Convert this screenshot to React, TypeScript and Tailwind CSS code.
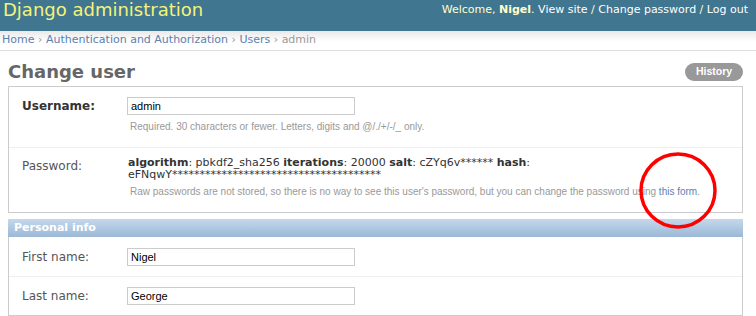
import React from "react";

// Old-style Django admin "Change user" page with a red circle drawn over the password help link

const dv = "font-['DejaVu_Sans',Verdana,sans-serif]";
const ar = "font-['Liberation_Sans',Arial,sans-serif]";

function TextInput({ value }: { value: string }) {
  return (
    <div
      className={`h-[18px] w-[228px] border border-[#ccc] bg-white pl-[3px] text-[11px] leading-[16px] text-black ${ar}`}
    >
      {value}
    </div>
  );
}

function Row({
  label,
  required,
  children,
  last,
  className = "",
}: {
  label: string;
  required?: boolean;
  children: React.ReactNode;
  last?: boolean;
  className?: string;
}) {
  return (
    <div className={`flex pl-[13px] ${last ? "" : "border-b border-[#eee]"} ${className}`}>
      <div
        className={`w-[105px] shrink-0 text-[12px] leading-[18px] ${dv} ${
          required ? "font-bold text-[#333]" : "text-[#555]"
        }`}
      >
        {label}
      </div>
      <div className="min-w-0 flex-1">{children}</div>
    </div>
  );
}

function Help({ children }: { children: React.ReactNode }) {
  return <p className={`pl-[3px] text-[10px] leading-[14px] text-[#999] ${ar}`}>{children}</p>;
}

export default function App() {
  return (
    <div className="relative h-[316px] w-[756px] overflow-hidden bg-white">
      {/* Header */}
      <div className="flex h-[31px] items-start justify-between bg-[#417690] pl-[3px] pr-[8px]">
        <div className={`text-[18px] leading-[20px] text-[#f4f379] ${dv}`}>Django administration</div>
        <div className={`pt-[3px] text-[11px] leading-[14px] text-[#ffc] ${dv}`}>
          Welcome, <span className="font-bold">Nigel</span>.{" "}
          <span className="text-white">View site</span> / <span className="text-white">Change password</span> /{" "}
          <span className="text-white">Log out</span>
        </div>
      </div>

      {/* Breadcrumbs */}
      <div
        className={`border-b border-[#ddd] bg-[linear-gradient(to_bottom,#e9e9e9,#fff_55%)] pb-[3px] pl-[2px] pt-[2px] text-[11px] leading-[14px] text-[#999] ${dv}`}
      >
        <span className="text-[#5b80b2]">Home</span> › <span className="text-[#5b80b2]">Authentication and Authorization</span> ›{" "}
        <span className="text-[#5b80b2]">Users</span> › admin
      </div>

      {/* Content */}
      <div className="w-[743px] pl-[8px] pt-[10px]">
        <div className="flex h-[22px] items-center justify-between">
          <h1 className={`text-[18px] font-bold leading-[22px] text-[#666] ${dv}`}>Change user</h1>
          <span
            className={`flex h-[18px] w-[58px] items-center justify-center rounded-full bg-[#999] text-[10.5px] font-bold text-white ${ar}`}
          >
            History
          </span>
        </div>

        <div className="mt-[3px] border border-[#ccc]">
          <Row label="Username:" required className="pb-[13px] pt-[10px]">
            <TextInput value="admin" />
            <div className="mt-[5px]">
              <Help>Required. 30 characters or fewer. Letters, digits and @/./+/-/_ only.</Help>
            </div>
          </Row>
          <Row label="Password:" last className="pb-[13px] pt-[9px]">
            <div className={`pl-[1px] text-[11px] leading-[12px] text-[#333] ${dv}`}>
              <b>algorithm</b>: pbkdf2_sha256 <b>iterations</b>: 20000 <b>salt</b>: cZYq6v****** <b>hash</b>:{" "}
              eFNqwY**************************************
            </div>
            <div className="mt-[4px]">
              <Help>
                Raw passwords are not stored, so there is no way to see this user's password, but you can change the
                password using <span className="text-[#5b80b2]">this form</span>.
              </Help>
            </div>
          </Row>
        </div>

        <div className="mt-[6px] border-x border-b border-[#ccc]">
          <h2
            className={`-mx-px h-[18px] bg-[linear-gradient(to_bottom,#c4d8ec,#9bb8d6)] pl-[6px] text-[11px] font-bold leading-[18px] text-white ${dv}`}
          >
            Personal info
          </h2>
          <Row label="First name:" className="pb-[10px] pt-[11px]">
            <TextInput value="Nigel" />
          </Row>
          <Row label="Last name:" last className="pb-[10px] pt-[10px]">
            <TextInput value="George" />
          </Row>
        </div>
      </div>

      {/* Red annotation circle */}
      <svg className="absolute left-[638px] top-[151px]" width="80" height="80" viewBox="0 0 80 80">
        <ellipse cx="40" cy="39.5" rx="37" ry="36.5" fill="none" stroke="#ff0000" strokeWidth="3.5" />
      </svg>
    </div>
  );
}
